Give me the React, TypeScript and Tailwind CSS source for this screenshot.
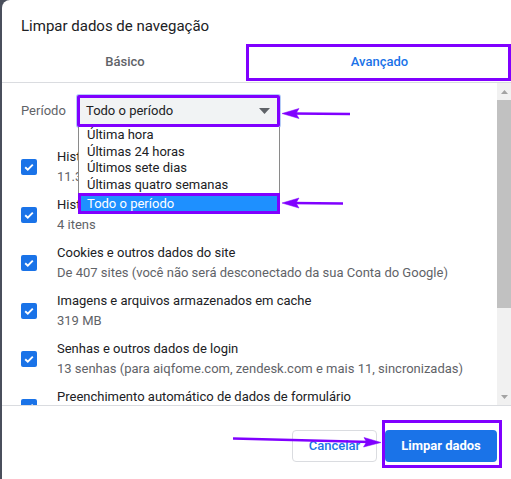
import React from "react";

const ROWS = [
  { title: "Histórico de navegação", sub: "11.352 itens" },
  { title: "Histórico de downloads", sub: "4 itens" },
  { title: "Cookies e outros dados do site", sub: "De 407 sites (você não será desconectado da sua Conta do Google)" },
  { title: "Imagens e arquivos armazenados em cache", sub: "319 MB" },
  { title: "Senhas e outros dados de login", sub: "13 senhas (para aiqfome.com, zendesk.com e mais 11, sincronizadas)" },
  { title: "Preenchimento automático de dados de formulário", sub: "2 sugestões" },
];

const OPTIONS = ["Última hora", "Últimas 24 horas", "Últimos sete dias", "Últimas quatro semanas"];

function Checkbox() {
  return (
    <div className="w-4 h-4 shrink-0 rounded-[2px] bg-[#1a73e8] flex items-center justify-center">
      <svg width="12" height="12" viewBox="0 0 12 12">
        <path d="M2.2 6.2 L4.8 8.7 L9.8 3.6" fill="none" stroke="white" strokeWidth="1.9" />
      </svg>
    </div>
  );
}

export default function App() {
  return (
    <div className="relative w-[511px] h-[479px] overflow-hidden bg-[#4a4f5c]" style={{ fontFamily: "Roboto, 'Liberation Sans', sans-serif" }}>
      <div className="ml-[2px] h-full bg-white rounded-tl-[8px] flex flex-col">
        {/* header */}
        <div className="pl-[19px] pt-[16px] text-[15px] leading-[20px] text-[#202124]">Limpar dados de navegação</div>
        <div className="mt-[8px] h-[39px] grid grid-cols-[246px_1fr] border-b border-[#dadce0] text-[13px] font-medium">
          <div className="flex items-center justify-center pb-[2px] text-[#5f6368]">Básico</div>
          <div className="flex items-center justify-center pb-[2px] text-[#1a73e8]">Avançado</div>
        </div>

        {/* scroll area */}
        <div className="h-[323px] flex border-b border-[#dadce0]">
          <div className="flex-1 overflow-hidden pl-[19px] pt-[12px] text-[13px]">
            <div className="flex items-center h-[32px]">
              <div className="w-[56px] text-[#5f6368]">Período</div>
              <div className="relative w-[203px] h-[32px]">
                <div className="h-full flex items-center justify-between border-[3px] border-[#8000ff] rounded-[2px] bg-[#f1f3f4] pl-[6px] pr-[7px] text-[#202124] shadow-[0_0_0_1px_#b6cdf7]">
                  <span>Todo o período</span>
                  <svg width="11" height="6" viewBox="0 0 11 6">
                    <path d="M0 0 L11 0 L5.5 6 Z" fill="#5f6368" />
                  </svg>
                </div>
                {/* open dropdown */}
                <div className="absolute top-full left-[1px] right-0 z-10 bg-white border-x border-[#8a8a8a] text-[#202124]">
                  {OPTIONS.map((o) => (
                    <div key={o} className="h-[16.5px] leading-[16.5px] pl-[8px]">{o}</div>
                  ))}
                  <div className="-mx-px h-[21px] leading-[15px] border-[3px] border-[#8000ff] bg-[#1e90ff] text-white pl-[6px]">Todo o período</div>
                </div>
              </div>
            </div>

            <div className="mt-[16px] flex flex-col">
              {ROWS.map((r) => (
                <div key={r.title} className="h-[48px] py-[4px] flex items-center shrink-0">
                  <Checkbox />
                  <div className="ml-[20px] leading-[20px] whitespace-nowrap">
                    <div className="text-[#202124]">{r.title}</div>
                    <div className="text-[#5f6368]">{r.sub}</div>
                  </div>
                </div>
              ))}
            </div>
          </div>

          {/* scrollbar */}
          <div className="w-[14px] bg-[#f1f1f1] flex flex-col">
            <div className="h-[17px] flex items-center justify-center">
              <svg width="7" height="4" viewBox="0 0 7 4"><path d="M0 4 L7 4 L3.5 0 Z" fill="#a3a3a3" /></svg>
            </div>
            <div className="h-[208px] bg-[#c1c1c1]" />
            <div className="flex-1" />
            <div className="h-[17px] flex items-center justify-center">
              <svg width="7" height="4" viewBox="0 0 7 4"><path d="M0 0 L7 0 L3.5 4 Z" fill="#a3a3a3" /></svg>
            </div>
          </div>
        </div>

        {/* footer */}
        <div className="flex-1 flex justify-end items-start pt-[24px] pr-[14px] gap-[8px] text-[13px] font-medium">
          <button className="w-[85px] h-[32px] border border-[#dadce0] rounded-[4px] text-[#1a73e8] bg-white">Cancelar</button>
          <button className="w-[112px] h-[32px] rounded-[4px] bg-[#1a73e8] text-white font-bold">Limpar dados</button>
        </div>
      </div>

      {/* annotation boxes */}
      <div className="absolute left-[246px] top-[44px] w-[265px] h-[37px] border-[3px] border-[#8000ff] pointer-events-none" />
      <div className="absolute left-[382px] top-[420px] w-[120px] h-[48px] border-[3px] border-[#8000ff] pointer-events-none" />

      {/* annotation arrows */}
      <svg className="absolute left-0 top-0 pointer-events-none" width="511" height="479" viewBox="0 0 511 479">
        <g fill="#8000ff" stroke="#8000ff">
          <line x1="350" y1="114" x2="292" y2="113.5" strokeWidth="2.5" />
          <path d="M282 113.5 L299 108.5 L296 113.5 L299 118.5 Z" strokeWidth="0.5" />
          <line x1="343" y1="203.5" x2="292" y2="203" strokeWidth="2.5" />
          <path d="M282 203 L299 198 L296 203 L299 208 Z" strokeWidth="0.5" />
          <line x1="233" y1="438.5" x2="370" y2="442" strokeWidth="2.5" />
          <path d="M381 442.5 L363.5 447 L366.5 442 L364 437.5 Z" strokeWidth="0.5" />
        </g>
      </svg>
    </div>
  );
}
